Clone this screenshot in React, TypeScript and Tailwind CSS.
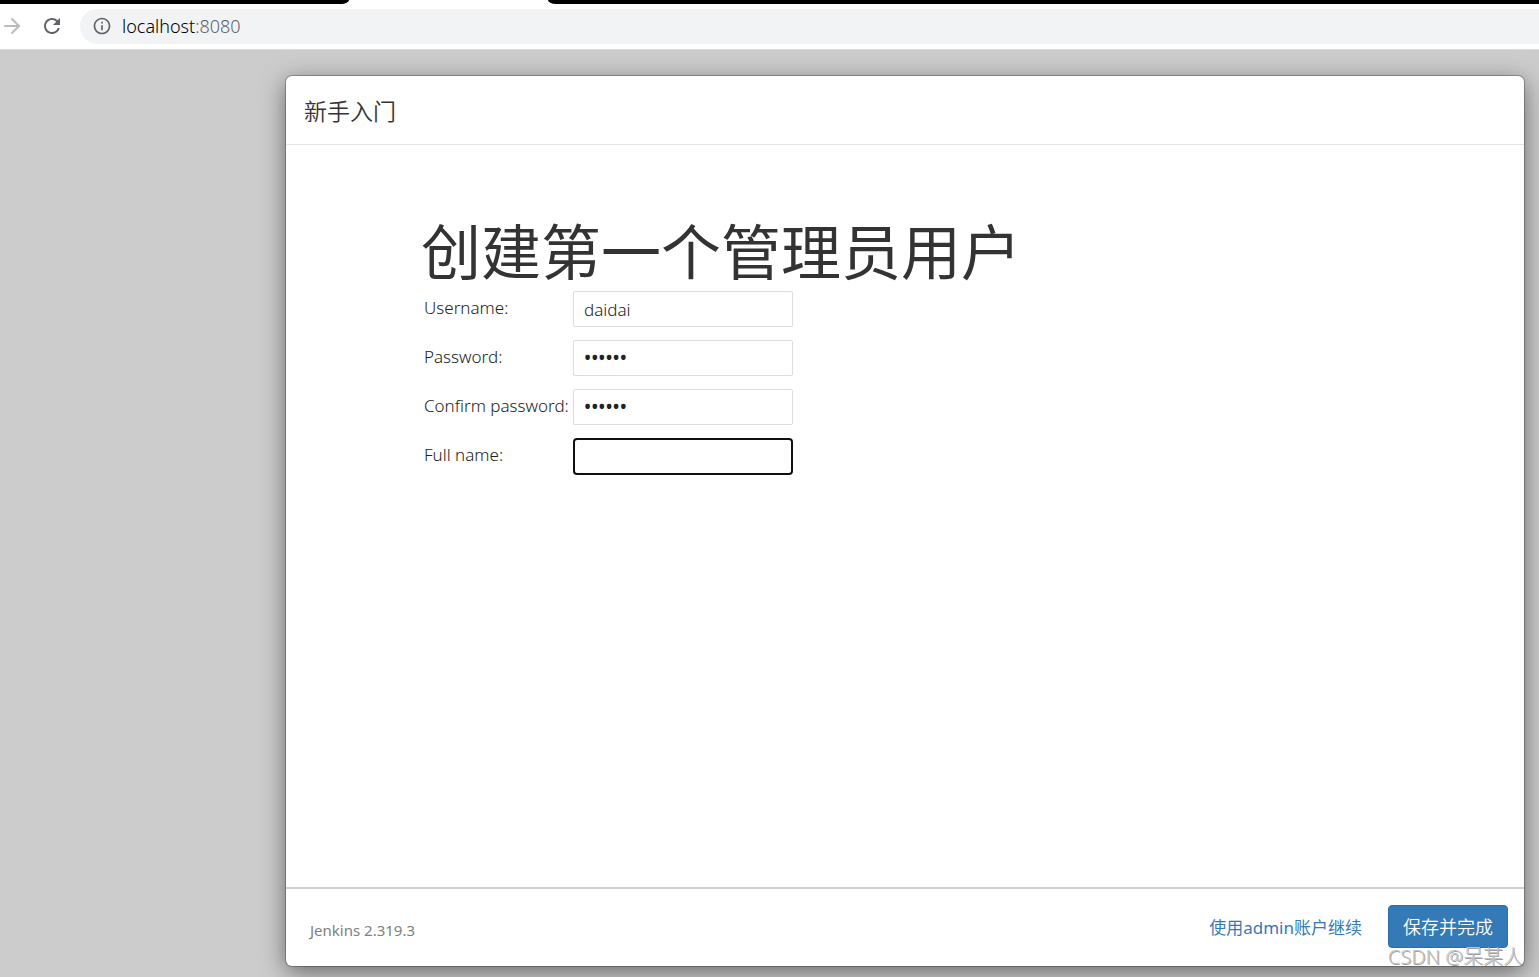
import { ArrowRight } from "lucide-react";
import { MdInfoOutline, MdRefresh } from "react-icons/md";

const fields = [
  { id: "username", label: "Username:", type: "text", value: "daidai" },
  { id: "password1", label: "Password:", type: "password", value: "daidai" },
  { id: "password2", label: "Confirm password:", type: "password", value: "daidai" },
  { id: "fullname", label: "Full name:", type: "text", value: "", active: true },
];

function BrowserBar() {
  return (
    <header className="bg-white border-b border-[#dadce0]">
      {/* Bottom edge of the tab strip */}
      <div className="flex h-1">
        <div className="w-[349px] bg-black rounded-br-[8px_4px]" />
        <div className="w-[199px]" />
        <div className="flex-1 bg-black rounded-bl-[8px_4px]" />
      </div>
      <div className="flex items-center pt-[5px] pb-[5px]">
        <button type="button" aria-label="Forward" className="w-6 h-[35px] pb-[2px] flex justify-center items-center text-[#babcbe]">
          <ArrowRight className="w-6 h-6" strokeWidth={2} />
        </button>
        <button type="button" aria-label="Reload" className="ml-4 w-6 h-[35px] pb-[2px] flex items-center text-[#5f6368]">
          <MdRefresh className="w-6 h-6" />
        </button>
        <div className="ml-4 flex-1 flex items-center h-[35px] pl-3 pb-px rounded-l-full bg-[#f1f3f4]">
          <MdInfoOutline className="w-5 h-5 text-[#5f6368]" />
          <span className="ml-[10px] pb-px text-[18px] leading-6 text-black">
            localhost<span className="text-[#5f6368]">:8080</span>
          </span>
        </div>
      </div>
    </header>
  );
}

function UserForm() {
  return (
    <form id="user-form" className="pl-[137px] pt-[71px]">
      <h1 className="-ml-[2px] text-[60px] leading-[72px] font-normal text-[#333]">创建第一个管理员用户</h1>
      <div className="mt-[3px] grid grid-cols-[148px_220px] gap-x-[2px] gap-y-[13px] text-[#222]">
        {fields.map((field) => (
          <div key={field.id} className="contents">
            <label htmlFor={field.id} className="pt-[5px] pl-px text-[17px] leading-6 whitespace-nowrap">
              {field.label}
            </label>
            <input
              id={field.id}
              type={field.type}
              defaultValue={field.value}
              className={
                field.active
                  ? "h-[37px] px-[9px] border-2 border-[#101010] rounded-[4px] bg-white text-[17px] outline-none"
                  : field.type === "password"
                    ? "h-[36px] px-[10px] border border-[#ddd] rounded-[2px] bg-white text-[19px] font-medium outline-none"
                    : "h-[36px] px-[10px] border border-[#ddd] rounded-[2px] bg-white text-[17px] outline-none"
              }
            />
          </div>
        ))}
      </div>
    </form>
  );
}

export default function App() {
  return (
    <div className="min-h-screen flex flex-col bg-[#ccc] overflow-hidden font-['Noto_Sans','Noto_Sans_CJK_SC',sans-serif] font-[350] text-[#333]">
      <BrowserBar />
      <main className="relative flex-1 flex flex-col pt-[26px] pr-[15px] pb-[11px] pl-[286px]">
        <section className="flex-1 flex flex-col bg-white rounded-[6px] shadow-[0_0_0_1px_rgba(0,0,0,0.25),0_6px_25px_rgba(0,0,0,0.5)]">
          <div className="h-[69px] flex items-center px-[18px] pt-px border-b border-[#e5e5e5]">
            <h4 className="text-[23px] leading-8">新手入门</h4>
          </div>
          <div className="flex-1">
            <UserForm />
          </div>
          <footer className="h-[79px] flex items-center pl-6 pr-4 pb-[2px] border-t-2 border-[#d0d0d0]">
            <span className="mt-[6px] text-[15px] leading-6 font-normal text-[#808080]">Jenkins 2.319.3</span>
            <a href="#continue" className="ml-auto pt-[2px] text-[17px] leading-6 font-normal text-[#337ab7]">
              使用admin账户继续
            </a>
            <button
              type="submit"
              form="user-form"
              className="ml-[26px] h-[43px] w-[120px] rounded-[4px] border border-[#2e6da4] bg-[#337ab7] text-[18px] leading-6 text-white"
            >
              保存并完成
            </button>
          </footer>
        </section>
        <span className="absolute right-[16px] bottom-[6px] text-[20px] leading-7 font-light text-[#c4c4c4] whitespace-nowrap [text-shadow:1px_1px_0_rgba(90,90,90,0.6)]">
          CSDN @呆某人
        </span>
      </main>
    </div>
  );
}
